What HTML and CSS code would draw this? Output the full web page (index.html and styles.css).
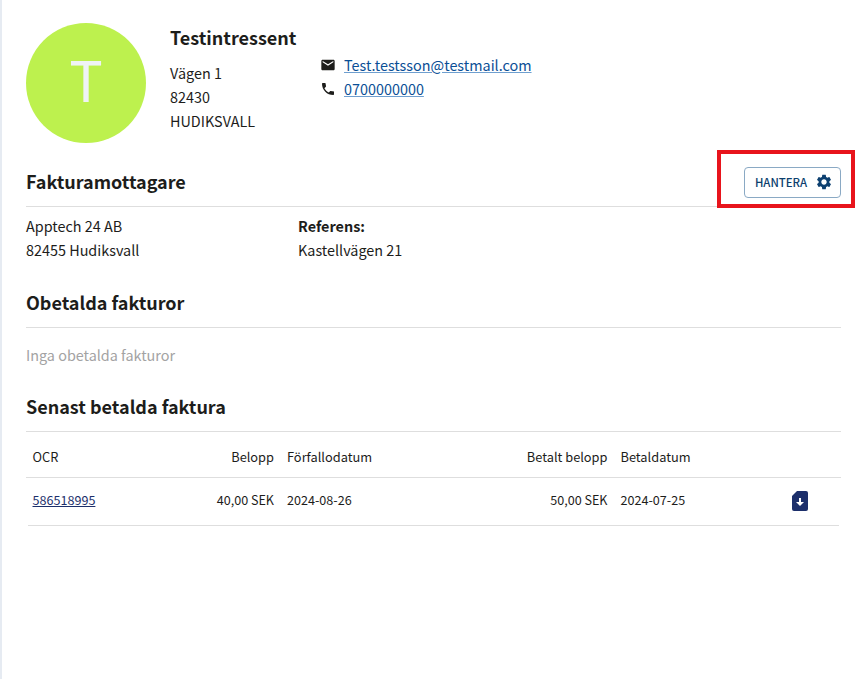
FILE: index.html
```html
<!DOCTYPE html>
<html lang="sv">
<head>
<meta charset="utf-8">
<title>Testintressent</title>
<link rel="stylesheet" href="styles.css">
</head>
<body>
<main class="page">
  <header class="profile">
    <div class="avatar">T</div>
    <div class="profile-info">
      <h1 class="name">Testintressent</h1>
      <div class="profile-cols">
        <address class="addr">
          <div>Vägen 1</div>
          <div>82430</div>
          <div>HUDIKSVALL</div>
        </address>
        <div class="contacts">
          <div class="contact">
            <svg class="cicon" viewBox="0 0 24 24"><path d="M20 4H4c-1.100 0-2 .9-2 2v12c0 1.100.9 2 2 2h16c1.100 0 2-.9 2-2V6c0-1.100-.9-2-2-2zm0 4l-8 5-8-5V6l8 5 8-5v2z"/></svg>
            <a class="link" href="#">Test.testsson@testmail.com</a>
          </div>
          <div class="contact">
            <svg class="cicon" viewBox="0 0 24 24"><path d="M6.620 10.790c1.440 2.830 3.760 5.140 6.590 6.590l2.200-2.200c.27-.27.67-.36 1.020-.24 1.120.37 2.330.57 3.570.57.55 0 1 .45 1 1V20c0 .55-.45 1-1 1-9.390 0-17-7.610-17-17 0-.55.45-1 1-1h3.500c.55 0 1 .45 1 1 0 1.250.2 2.450.57 3.570.11.35.03.74-.25 1.020l-2.200 2.200z"/></svg>
            <a class="link" href="#">0700000000</a>
          </div>
        </div>
      </div>
    </div>
  </header>

  <section class="sec-invoice">
    <div class="sec-head">
      <h2 class="title title-up">Fakturamottagare</h2>
      <button class="btn" type="button"><span class="btn-label">HANTERA</span>
        <svg class="gear" viewBox="0 0 24 24"><path d="M19.140 12.940c.04-.3.060-.61.060-.94 0-.32-.02-.64-.07-.94l2.030-1.580c.18-.14.230-.41.120-.61l-1.920-3.320c-.12-.22-.37-.29-.59-.22l-2.390.96c-.5-.38-1.030-.7-1.620-.94l-.36-2.540c-.04-.24-.24-.41-.48-.41h-3.840c-.24 0-.43.17-.47.41l-.36 2.540c-.59.24-1.130.57-1.620.94l-2.390-.96c-.22-.08-.47 0-.59.22L2.740 8.870c-.12.21-.08.47.12.61l2.030 1.580c-.05.3-.09.63-.09.94s.02.64.07.94l-2.030 1.580c-.18.14-.23.41-.12.61l1.920 3.320c.12.22.37.29.59.22l2.390-.96c.5.38 1.030.7 1.620.94l.36 2.540c.05.24.24.41.48.41h3.840c.24 0 .44-.17.47-.41l.36-2.540c.59-.24 1.130-.56 1.620-.94l2.390.96c.22.08.47 0 .59-.22l1.920-3.320c.12-.22.07-.47-.12-.61l-2.010-1.580zM12 15.600c-1.980 0-3.600-1.620-3.600-3.600s1.620-3.600 3.600-3.600 3.600 1.620 3.600 3.600-1.620 3.600-3.600 3.600z"/></svg>
      </button>
    </div>
    <div class="recipient">
      <div class="rec-col">
        <div>Apptech 24 AB</div>
        <div>82455 Hudiksvall</div>
      </div>
      <div class="rec-col">
        <div class="strong">Referens:</div>
        <div>Kastellvägen 21</div>
      </div>
    </div>
  </section>

  <section class="sec-unpaid">
    <h2 class="title title-rule">Obetalda fakturor</h2>
    <p class="empty">Inga obetalda fakturor</p>
  </section>

  <section class="sec-paid">
    <h2 class="title title-rule">Senast betalda faktura</h2>
    <div class="tbl">
      <div class="row row-head">
        <div>OCR</div>
        <div class="num">Belopp</div>
        <div>Förfallodatum</div>
        <div class="num">Betalt belopp</div>
        <div>Betaldatum</div>
        <div></div>
      </div>
      <div class="row row-body">
        <div class="first"><a class="ocr" href="#">586518995</a></div>
        <div class="num">40,00 SEK</div>
        <div>2024-08-26</div>
        <div class="num">50,00 SEK</div>
        <div>2024-07-25</div>
        <div class="act">
          <svg class="doc" viewBox="0 0 16 20"><path class="doc-bg" d="M5 0h9a2 2 0 0 1 2 2v16a2 2 0 0 1-2 2H2a2 2 0 0 1-2-2V5z"/><path class="doc-fg" d="M7 7h2v4h3l-4 4-4-4h3z"/></svg>
        </div>
      </div>
    </div>
  </section>
</main>
<div class="highlight"></div>
</body>
</html>
```

FILE: styles.css
```css
* { box-sizing: border-box; }
html, body { margin: 0; padding: 0; height: 100%; background: #fff; }
body {
  font-family: "Noto Sans CJK SC", "Noto Sans", sans-serif;
  font-size: 14.4px;
  line-height: 24px;
  color: #1d1d1b;
  position: relative;
  overflow: hidden;
}
.page {
  height: 100%;
  border-left: 2px solid #e6ebf2;
  padding: 23px 23px 0 24px;
}
.profile { display: flex; gap: 24px; }
.avatar {
  width: 120px; height: 120px; border-radius: 50%;
  background: #bdf14e; color: #eff3f6;
  font-size: 56px; font-weight: 400; line-height: 110px; text-align: center;
  flex: none;
}
.name { margin: 2px 0 0; font-size: 18px; line-height: 24px; font-weight: 700; }
.profile-cols { display: flex; margin-top: 12px; }
.addr { font-style: normal; width: 150px; }
.contacts { margin-top: -8px; }
.contact { display: flex; align-items: center; gap: 8px; height: 24px; }
.cicon { width: 16px; height: 16px; fill: #1d1d1b; flex: none; }
.link { color: #0b4f96; text-decoration: underline; text-decoration-color: #6f9fcf; }

.sec-invoice { margin-top: 20px; }
.sec-head {
  display: flex; justify-content: space-between; align-items: center;
  height: 44px; border-bottom: 1px solid #dedede; padding-bottom: 5px;
}
.title { margin: 0; font-size: 18px; line-height: 24px; font-weight: 700; }
.title-up { margin-bottom: 2px; }
.btn {
  display: flex; align-items: center; gap: 7px;
  height: 31px; width: 97px; padding: 0 0 0 9px;
  background: #fff; border: 1px solid #8aa9c4; border-radius: 4px;
  color: #0d3f6e; font: inherit; font-size: 11.4px; font-weight: 500;
}
.btn-label { width: 54px; }
.gear { width: 18px; height: 18px; fill: #0d4070; flex: none; }
.recipient { display: flex; padding-top: 7px; }
.rec-col { width: 272px; }
.strong { font-weight: 700; }

.sec-unpaid { margin-top: 28px; }
.title-rule { height: 38px; border-bottom: 1px solid #dedede; }
.empty { margin: 15px 0 0; color: #a3a3a3; }

.sec-paid { margin-top: 27px; }
.tbl { font-size: 12.8px; }
.row { display: grid; align-items: center; }
.row > div { padding: 0 6.500px; }
.row-head {
  grid-template-columns: 100px 154.500px 140px 193.500px 160px 1fr;
  height: 46px; border-bottom: 1px solid #dedede; padding-top: 5px;
}
.row-body {
  grid-template-columns: 98px 154.500px 140px 193.500px 160px 1fr;
  height: 48px; margin: 0 2px; border-bottom: 1px solid #dedede; padding-bottom: 4px;
  font-size: 12.6px;
}
.row .num { text-align: right; }
.row > .first { padding-left: 4.500px; }
.row > .act { padding: 0; }
.ocr { color: #1c2f6b; text-decoration: underline; }
.doc { display: block; width: 16px; height: 20px; margin: 2px 0 0 18px; }
.doc-bg { fill: #1c2f6b; }
.doc-fg { fill: #fff; }

.highlight {
  position: absolute; left: 717px; top: 150px; width: 138px; height: 58px;
  border: 4px solid #e8141c;
}
```
